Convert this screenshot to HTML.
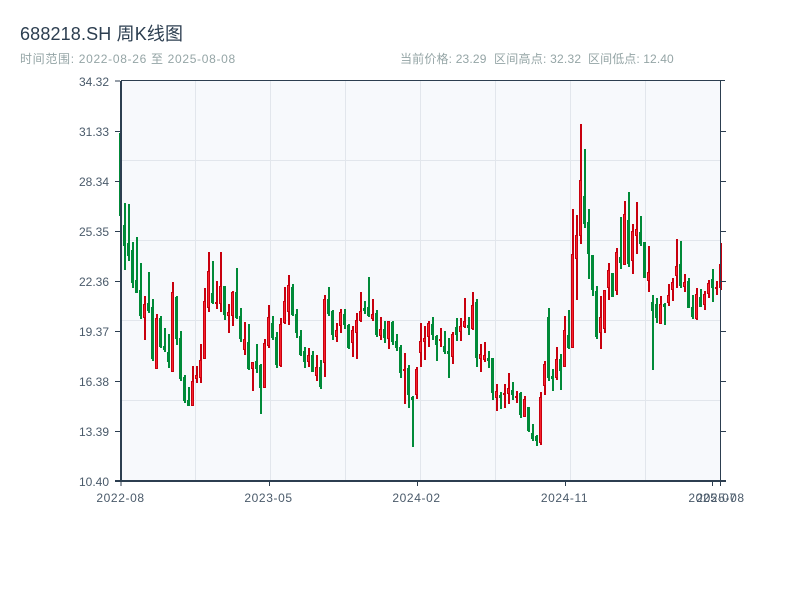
<!DOCTYPE html>
<html lang="zh">
<head>
<meta charset="utf-8">
<title>688218.SH 周K线图</title>
<style>
html,body{margin:0;padding:0;background:#fff;width:800px;height:600px;overflow:hidden}
svg{display:block}
text{font-family:"Liberation Sans","Noto Sans CJK SC",sans-serif}
</style>
</head>
<body>
<svg width="800" height="600" viewBox="0 0 800 600" xmlns="http://www.w3.org/2000/svg">
<rect width="800" height="600" fill="#fff"/>
<text x="20" y="40" font-size="18" fill="#2c3e50" letter-spacing=".15">688218.SH 周K线图</text>
<text x="20" y="63" font-size="12" fill="#95a5a6" letter-spacing=".68">时间范围: 2022-08-26 至 2025-08-08</text>
<text x="400" y="63" font-size="12" fill="#95a5a6" letter-spacing=".17">当前价格: 23.29</text>
<text x="494" y="63" font-size="12" fill="#95a5a6" letter-spacing=".24">区间高点: 32.32</text>
<text x="588" y="63" font-size="12" fill="#95a5a6" letter-spacing=".1">区间低点: 12.40</text>

<rect x="121" y="81" width="600" height="400" fill="#f7f9fc"/>
<path d="M195.5 81V480M270.5 81V480M345.5 81V480M420.5 81V480M495.5 81V480M570.5 81V480M645.5 81V480M121 160.5H720M121 240.5H720M121 320.5H720M121 400.5H720" stroke="#e2e6ec" stroke-width="1" fill="none"/>

<!-- green wicks -->
<path fill="none" stroke="#008a38" stroke-width="2" d="M121 133V216M125 203V270M129 204V261M133 242V288M137 237V293M141 263V319M149 272V313M153 299V361M161 316V348M165 328V352M169 334V368M177 296V345M181 331V381M185 375V403M189 387V406M213 261V304M225 286V320M237 268V319M241 308V342M249 324V370M257 344V373M261 364V414M273 316V340M277 332V368M293 284V316M297 309V338M301 330V356M305 347V368M313 351V372M321 360V389M329 287V316M333 310V340M345 309V329M349 324V349M365 301V314M369 277V317M377 310V337M385 321V343M393 321V345M397 334V351M401 345V378M409 365V408M413 396V447M433 317V340M437 335V361M445 331V354M449 338V378M457 318V341M469 317V335M477 299V367M489 351V368M493 358V400M501 392V409M513 382V400M521 392V418M529 407V432M533 424V441M537 435V446M549 308V381M553 369V391M561 354V390M569 310V349M585 149V228M589 209V279M593 255V296M597 286V339M613 273V297M621 217V269M629 192V267M641 216V246M645 242V278M653 295V370M657 298V323M665 303V325M681 241V288M689 278V308M693 295V319M701 289V307M713 269V302"/>
<!-- green bodies -->
<path fill="none" stroke="#008a38" stroke-width="3" d="M120.500 133V216M124.500 225V246M128.500 243V256M132.500 250V283M136.500 280V293M140.500 290V316M148.500 303V311M152.500 307V359M160.500 318V347M164.500 346V350M168.500 352V362M176.500 297V339M180.500 338V379M184.500 377V401M188.500 400V406M212.500 293V303M224.500 286V315M236.500 292V318M240.500 316V339M248.500 342V369M256.500 361V369M260.500 365V388M272.500 323V338M276.500 337V365M292.500 287V315M296.500 314V333M300.500 336V355M304.500 351V362M312.500 355V372M320.500 367V387M328.500 299V314M332.500 311V335M344.500 314V325M348.500 325V348M364.500 308V311M368.500 307V316M376.500 313V335M384.500 329V338M392.500 322V342M396.500 341V348M400.500 347V373M408.500 368V395M412.500 397V400M432.500 324V335M436.500 336V345M444.500 346V352M448.500 351V354M456.500 327V335M468.500 325V328M476.500 302V358M488.500 358V361M492.500 358V393M500.500 395V398M512.500 390V395M520.500 393V415M528.500 407V431M532.500 433V439M536.500 436V441M548.500 317V378M552.500 376V379M560.500 359V371M568.500 335V348M584.500 196V224M588.500 222V254M592.500 255V290M596.500 291V337M612.500 273V297M620.500 257V263M628.500 220V264M640.500 232V244M644.500 242V278M652.500 302V311M656.500 304V318M664.500 304V307M680.500 264V286M688.500 281V308M692.500 307V317M700.500 297V307M712.500 279V288"/>
<!-- red wicks -->
<path fill="none" stroke="#c8000e" stroke-width="2" d="M145 296V340M157 314V369M173 282V372M193 366V406M197 366V383M201 344V383M205 288V359M209 252V312M217 281V309M221 252V312M229 304V333M233 291V326M245 322V355M253 362V391M265 339V388M269 305V348M281 318V367M285 287V324M289 275V325M309 348V367M317 355V381M325 295V377M337 323V342M341 309V333M353 326V357M357 313V359M361 292V322M373 299V321M381 317V340M389 321V349M405 353V404M417 367V399M421 323V367M425 326V360M429 321V347M441 328V347M453 332V364M461 318V341M465 298V328M473 292V330M481 344V372M485 342V362M497 384V411M505 384V408M509 373V404M517 391V403M525 396V417M541 392V445M545 361V395M557 347V380M565 316V367M573 209V348M577 215V300M581 124V244M601 296V349M605 290V333M609 263V300M617 248V295M625 201V265M633 224V274M637 202V254M649 246V292M661 296V324M669 284V306M673 278V301M677 239V288M685 274V292M697 288V320M705 291V310M709 280V298M717 281V295M721 243V290"/>
<!-- red bodies -->
<path fill="none" stroke="#c8000e" stroke-width="3" d="M144.500 304V318M156.500 318V369M172.500 292V372M192.500 381V406M196.500 375V379M200.500 360V378M204.500 301V359M208.500 271V308M216.500 302V304M220.500 286V304M228.500 312V316M232.500 292V316M244.500 339V350M252.500 362V369M264.500 343V388M268.500 317V346M280.500 324V366M284.500 301V323M288.500 285V312M308.500 355V362M316.500 367V376M324.500 299V363M336.500 330V337M340.500 312V326M352.500 330V343M356.500 320V333M360.500 311V321M372.500 314V319M380.500 329V336M388.500 321V339M404.500 369V371M416.500 369V395M420.500 341V353M424.500 338V342M428.500 323V337M440.500 339V341M452.500 334V357M460.500 326V332M464.500 321V327M472.500 305V329M480.500 354V359M484.500 355V360M496.500 391V398M504.500 393V395M508.500 388V394M516.500 396V398M524.500 399V417M540.500 397V443M544.500 364V386M556.500 359V378M564.500 330V367M572.500 254V348M576.500 235V259M580.500 180V236M600.500 317V333M604.500 290V329M608.500 270V288M616.500 252V291M624.500 214V265M632.500 231V261M636.500 229V236M648.500 272V281M660.500 304V324M668.500 295V303M672.500 282V290M676.500 266V276M684.500 282V287M696.500 294V319M704.500 294V305M708.500 283V294M716.500 287V289M720.500 264V288"/>
<!-- red body fills -->
<path fill="none" stroke="#f5222d" stroke-width="1" d="M144.500 305V317M156.500 319V368M172.500 293V371M192.500 382V405M196.500 376V378M200.500 361V377M204.500 302V358M208.500 272V307M220.500 287V303M228.500 313V315M232.500 293V315M244.500 340V349M252.500 363V368M264.500 344V387M268.500 318V345M280.500 325V365M284.500 302V322M288.500 286V311M308.500 356V361M316.500 368V375M324.500 300V362M336.500 331V336M340.500 313V325M352.500 331V342M356.500 321V332M360.500 312V320M372.500 315V318M380.500 330V335M388.500 322V338M416.500 370V394M420.500 342V352M424.500 339V341M428.500 324V336M452.500 335V356M460.500 327V331M464.500 322V326M472.500 306V328M480.500 355V358M484.500 356V359M496.500 392V397M508.500 389V393M524.500 400V416M540.500 398V442M544.500 365V385M556.500 360V377M564.500 331V366M572.500 255V347M576.500 236V258M580.500 181V235M600.500 318V332M604.500 291V328M608.500 271V287M616.500 253V290M624.500 215V264M632.500 232V260M636.500 230V235M648.500 273V280M660.500 305V323M668.500 296V302M672.500 283V289M676.500 267V275M684.500 283V286M696.500 295V318M704.500 295V304M708.500 284V293M720.500 265V287"/>

<!-- axes -->
<path fill="none" stroke="#2c3e50" stroke-width="1" d="M121 80.500H725M115 81H120M115 131.500H120M115 181.500H120M115 231.500H120M115 281.500H120M115 331.500H120M115 381.500H120M115 431.500H120M115 481.500H120M720.500 81V481M721 131.500H726M721 181.500H726M721 231.500H726M721 281.500H726M721 331.500H726M721 381.500H726M721 431.500H726M121 482V486M269.500 482V486M417.500 482V486M565.500 482V486M712.500 482V486M720.500 482V486"/>
<rect x="120" y="81" width="2" height="401" fill="#2c3e50"/>
<rect x="115" y="480" width="611" height="2" fill="#2c3e50"/>

<g font-size="12" fill="#4a5a6a" text-anchor="end">
<text x="109" y="86">34.32</text>
<text x="109" y="136">31.33</text>
<text x="109" y="186">28.34</text>
<text x="109" y="236">25.35</text>
<text x="109" y="286">22.36</text>
<text x="109" y="336">19.37</text>
<text x="109" y="386">16.38</text>
<text x="109" y="436">13.39</text>
<text x="109" y="486">10.40</text>
</g>
<g font-size="12" fill="#4a5a6a" text-anchor="middle" letter-spacing=".6">
<text x="120.500" y="502">2022-08</text>
<text x="268.500" y="502">2023-05</text>
<text x="416.500" y="502">2024-02</text>
<text x="564.500" y="502">2024-11</text>
<text x="712.500" y="502">2025-07</text>
<text x="720.500" y="502">2025-08</text>
</g>
</svg>
</body>
</html>
